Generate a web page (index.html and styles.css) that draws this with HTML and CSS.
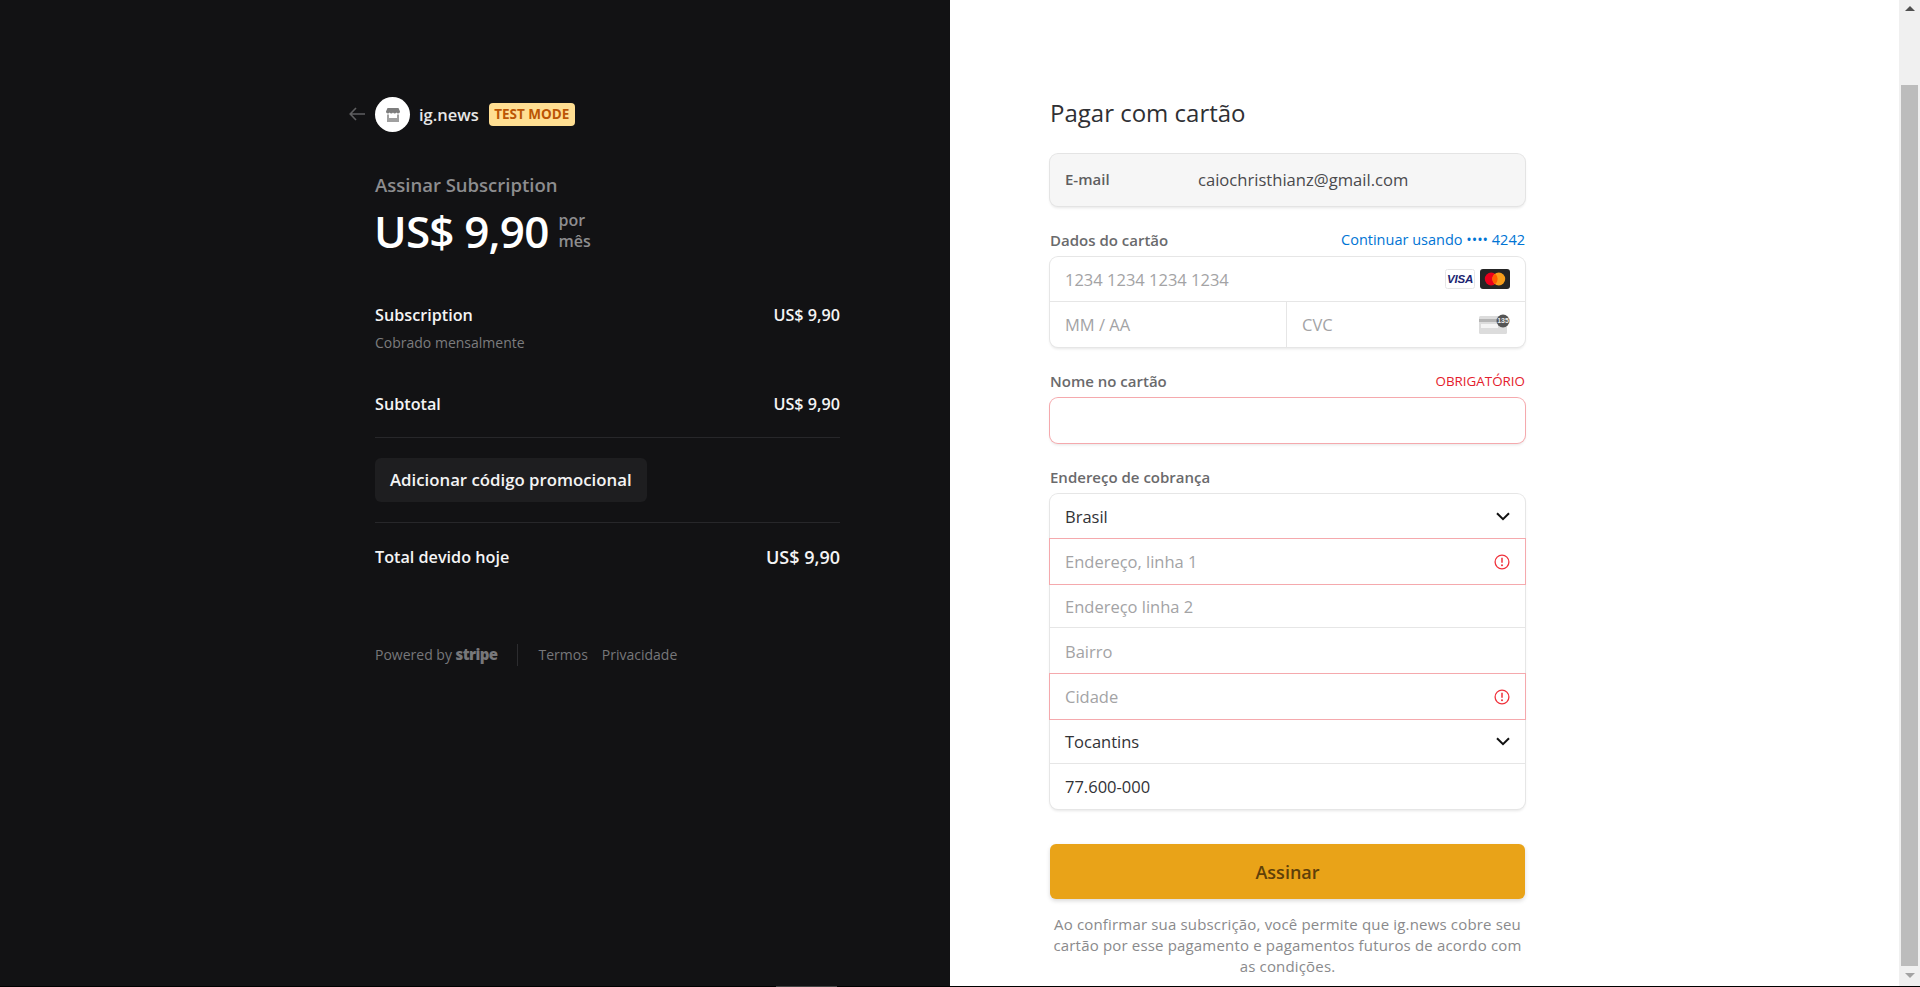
FILE: index.html
```html
<!doctype html>
<html lang="pt-BR">
<head>
  <meta charset="utf-8">
  <title>Pagar com cartão</title>
  <link rel="stylesheet" href="styles.css">
</head>
<body>
  <div class="page">
    <main class="checkout">
      <section class="summary">
        <div class="summary-inner">
          <header class="brand">
            <svg class="back" width="16" height="14" viewBox="0 0 16 14"><path d="M7 1 1.200 7 7 13M1.500 7H16" fill="none" stroke="#5f5f61" stroke-width="1.600"/></svg>
            <span class="logo">
              <svg width="14" height="14" viewBox="0 0 14 14"><path d="M1.500 0h11L14 3.600c0 1.200-.9 1.900-1.900 1.900-.8 0-1.400-.4-1.700-1-.4.6-.9 1-1.700 1s-1.300-.4-1.700-1c-.4.6-.9 1-1.700 1s-1.300-.4-1.700-1c-.3.6-.9 1-1.700 1C.9 5.500 0 4.800 0 3.600Z" fill="#7d7d7d"/><path d="M1 6.500h2v3.500h8V6.500h2V14H1Z" fill="#a0a0a0"/></svg>
            </span>
            <span class="brand-name">ig.news</span>
            <span class="badge">TEST MODE</span>
          </header>

          <div class="plan">
            <div class="plan-title">Assinar Subscription</div>
            <div class="plan-price">
              <span class="price">US$ 9,90</span>
              <span class="period">por<br>mês</span>
            </div>
          </div>

          <div class="line line-first">
            <div>
              <div class="line-name">Subscription</div>
              <div class="line-note">Cobrado mensalmente</div>
            </div>
            <div class="line-name">US$ 9,90</div>
          </div>

          <div class="line line-subtotal">
            <div class="line-name">Subtotal</div>
            <div class="line-name">US$ 9,90</div>
          </div>

          <div class="promo">
            <span class="promo-btn">Adicionar código promocional</span>
          </div>

          <div class="line line-total">
            <div class="line-name">Total devido hoje</div>
            <div class="total-price">US$ 9,90</div>
          </div>

          <footer class="legal">
            <span class="powered">Powered by <b class="stripe">stripe</b></span>
            <span class="legal-links">
              <span>Termos</span>
              <span>Privacidade</span>
            </span>
          </footer>
        </div>
      </section>

      <section class="payment">
        <form class="pay-form">
          <h1 class="pay-title">Pagar com cartão</h1>

          <div class="email-box">
            <span class="email-label">E-mail</span>
            <span class="email-value">caiochristhianz@gmail.com</span>
          </div>

          <div class="field-head">
            <span class="field-label">Dados do cartão</span>
            <span class="field-link">Continuar usando •••• 4242</span>
          </div>
          <div class="box">
            <div class="row row-h45">
              <span class="hint">1234 1234 1234 1234</span>
              <span class="card-icons">
                <svg width="30" height="20" viewBox="0 0 30 20"><rect x=".5" y=".5" width="29" height="19" rx="2" fill="#fff" stroke="#e6e6e6"/><text class="visa-text" x="15" y="14.200" text-anchor="middle">VISA</text></svg>
                <svg width="30" height="20" viewBox="0 0 30 20"><rect width="30" height="20" rx="3" fill="#252525"/><circle cx="11.200" cy="10" r="6.400" fill="#eb001b"/><circle cx="18.800" cy="10" r="6.400" fill="#f79e1b"/><path d="M15 4.800a6.400 6.400 0 0 1 0 10.400 6.400 6.400 0 0 1 0-10.400Z" fill="#ff5f00"/></svg>
              </span>
            </div>
            <div class="row-split">
              <div class="cell cell-exp"><span class="hint">MM / AA</span></div>
              <div class="cell cell-cvc">
                <span class="hint">CVC</span>
                <svg width="31" height="21" viewBox="0 0 31 21"><rect y="2" width="28" height="18" rx="1.500" fill="#dcdcdc"/><rect y="5" width="28" height="3" fill="#b5b5b5"/><rect x="2" y="10" width="17" height="4" fill="#f4f4f4"/><circle cx="24" cy="7" r="6.500" fill="#555"/><text class="cvc-text" x="24" y="9.300" text-anchor="middle">135</text></svg>
              </div>
            </div>
          </div>

          <div class="field-head">
            <span class="field-label">Nome no cartão</span>
            <span class="field-error">OBRIGATÓRIO</span>
          </div>
          <div class="box box-error"></div>

          <div class="field-head">
            <span class="field-label">Endereço de cobrança</span>
          </div>
          <div class="box">
            <div class="row row-h45 row-plain"><span class="value">Brasil</span><svg class="chevron" width="14" height="9" viewBox="0 0 14 9"><path d="M1 1.200 7 7.200l6-6" fill="none" stroke="#111" stroke-width="2"/></svg></div>
            <div class="row row-h45 row-error"><span class="hint">Endereço, linha 1</span><svg class="alert" width="16" height="16" viewBox="0 0 16 16"><circle cx="8" cy="8" r="6.900" fill="none" stroke="#f0323c" stroke-width="1.300"/><path d="M8 3.800v5" stroke="#f0323c" stroke-width="1.500"/><circle cx="8" cy="11.300" r="1" fill="#f0323c"/></svg></div>
            <div class="row row-h44"><span class="hint">Endereço linha 2</span></div>
            <div class="row row-h46 row-plain"><span class="hint">Bairro</span></div>
            <div class="row row-h45 row-error"><span class="hint">Cidade</span><svg class="alert" width="16" height="16" viewBox="0 0 16 16"><circle cx="8" cy="8" r="6.900" fill="none" stroke="#f0323c" stroke-width="1.300"/><path d="M8 3.800v5" stroke="#f0323c" stroke-width="1.500"/><circle cx="8" cy="11.300" r="1" fill="#f0323c"/></svg></div>
            <div class="row row-h45"><span class="value">Tocantins</span><svg class="chevron" width="14" height="9" viewBox="0 0 14 9"><path d="M1 1.200 7 7.200l6-6" fill="none" stroke="#111" stroke-width="2"/></svg></div>
            <div class="row row-h45 row-plain"><span class="value">77.600-000</span></div>
          </div>

          <button class="submit" type="button">Assinar</button>
          <p class="terms">Ao confirmar sua subscrição, você permite que ig.news cobre seu cartão por esse pagamento e pagamentos futuros de acordo com as condições.</p>
        </form>
      </section>
    </main>

    <aside class="scrollbar">
      <span class="arrow-up"></span>
      <span class="thumb"></span>
      <span class="arrow-down"></span>
    </aside>
  </div>
  <div class="bottom-edge"><span class="edge-mark"></span></div>
</body>
</html>
```

FILE: styles.css
```css
*{
  box-sizing: border-box;
}
html, body{
  height: 100%;
}
body{
  margin: 0;
  overflow: hidden;
  background: #000;
  font-family: "Open Sans", "Noto Sans", "Liberation Sans", sans-serif;
  display: flex;
  flex-direction: column;
}
.page{
  display: flex;
  height: 986px;
}
.checkout{
  display: grid;
  grid-template-columns: 950px 949px;
  flex: 1;
}

/* left side */
.summary{
  background: #121214;
  padding-top: 97px;
  padding-left: 375px;
}
.summary-inner{
  width: 465px;
}
.brand{
  display: flex;
  align-items: center;
  height: 35px;
  position: relative;
}
.back{
  position: absolute;
  left: -26px;
  top: 10px;
}
.logo{
  width: 35px;
  height: 35px;
  border-radius: 50%;
  background: #fff;
  display: flex;
  align-items: center;
  justify-content: center;
  margin-right: 9px;
}
.brand-name{
  color: #e7e7e7;
  font-size: 16.500px;
  font-weight: 600;
  margin-right: 10px;
}
.badge{
  background: #ffde92;
  color: #bb5504;
  border-radius: 4px;
  font-size: 13.500px;
  font-weight: 700;
  line-height: 23px;
  height: 23px;
  width: 86px;
  text-align: center;
  white-space: nowrap;
}
.plan{
  margin-top: 41px;
}
.plan-title{
  color: #8d8d8f;
  font-size: 18.500px;
  font-weight: 600;
  line-height: 24px;
}
.plan-price{
  display: flex;
  align-items: center;
  margin-top: 6px;
}
.price{
  color: #fff;
  font-size: 44px;
  font-weight: 600;
  line-height: 56px;
  letter-spacing: -.8px;
  margin-left: -1px;
}
.period{
  color: #8d8d8f;
  font-size: 16px;
  font-weight: 600;
  line-height: 21px;
  margin-left: 10px;
}
.line{
  display: flex;
  justify-content: space-between;
}
.line-first{
  margin-top: 45px;
}
.line-name{
  color: #f4f4f4;
  font-size: 16.200px;
  font-weight: 600;
  line-height: 22px;
}
.line-note{
  color: #7c7c7e;
  font-size: 14px;
  line-height: 18px;
  margin-top: 8px;
}
.line-subtotal{
  margin-top: 41px;
  padding-bottom: 22px;
  border-bottom: 1px solid #27272a;
}
.promo{
  display: flex;
  padding: 20px 0;
  border-bottom: 1px solid #27272a;
}
.promo-btn{
  background: #1e1e20;
  color: #f4f4f4;
  border-radius: 6px;
  font-size: 16.800px;
  font-weight: 600;
  line-height: 44px;
  padding: 0 15px;
}
.line-total{
  margin-top: 23px;
}
.total-price{
  color: #f4f4f4;
  font-size: 18px;
  font-weight: 600;
  line-height: 22px;
}
.legal{
  display: flex;
  align-items: center;
  margin-top: 75px;
  color: #77777a;
  font-size: 14px;
  line-height: 22px;
}
.stripe{
  font-size: 15px;
  font-weight: 800;
  letter-spacing: -.6px;
  color: #77777a;
}
.legal-links{
  display: flex;
  gap: 14px;
  border-left: 1px solid #2c2c2f;
  margin-left: 20px;
  padding-left: 20px;
}

/* right side */
.payment{
  background: #fff;
  padding-left: 100px;
}
.pay-form{
  width: 475px;
}
.pay-title{
  margin: 0;
  padding-top: 95px;
  color: #2f3034;
  font-size: 24px;
  font-weight: 500;
  line-height: 36px;
}
.email-box{
  display: flex;
  align-items: center;
  height: 52px;
  margin-top: 23px;
  padding: 0 15px 2px;
  background: #f6f6f6;
  border-radius: 8px;
  box-shadow: 0 0 0 1px #e4e4e4, 0 2px 3px rgba(0,0,0,.1);
}
.email-label{
  width: 133px;
  color: #5e5e60;
  font-size: 15px;
  font-weight: 600;
}
.email-value{
  color: #4a4a4d;
  font-size: 16.600px;
}
.field-head{
  display: flex;
  justify-content: space-between;
  align-items: center;
  height: 20px;
  margin-top: 24px;
  margin-bottom: 7px;
}
.field-label{
  color: #6a6a6c;
  font-size: 15px;
  font-weight: 600;
}
.field-link{
  color: #0074d4;
  font-size: 14.500px;
  margin-top: -2px;
}
.field-error{
  color: #e4202c;
  font-size: 13.400px;
  font-weight: 500;
}
.box{
  border-radius: 8px;
  background: #fff;
  box-shadow: 0 0 0 1px #e6e6e6, 0 2px 3px rgba(0,0,0,.1);
}
.box-error{
  height: 45px;
  box-shadow: 0 0 0 1px #f5a9ad, 0 2px 3px rgba(0,0,0,.1);
}
.row{
  display: flex;
  justify-content: space-between;
  align-items: center;
  padding: 0 15px;
  border-bottom: 1px solid #e6e6e6;
}
.row-split{
  display: grid;
  grid-template-columns: 237px 1fr;
  height: 45px;
}
.cell{
  display: flex;
  justify-content: space-between;
  align-items: center;
  padding: 0 15px;
}
.cell-exp{
  border-right: 1px solid #e6e6e6;
}
.hint{
  color: #a3a3a5;
  font-size: 16.500px;
}
.value{
  color: #323236;
  font-size: 16.500px;
}
.card-icons{
  display: flex;
  gap: 5px;
}
.visa-text{
  font-family: "Liberation Sans", sans-serif;
  font-size: 11.500px;
  font-weight: 700;
  font-style: italic;
  letter-spacing: -.2px;
  fill: #1a1f71;
}
.cvc-text{
  font-family: "Liberation Sans", sans-serif;
  font-size: 7px;
  font-weight: 700;
  fill: #e8e8e8;
}
.row-h44{
  height: 44px;
  padding-top: 1px;
}
.row-h45{
  height: 45px;
}
.row-h46{
  height: 46px;
}
.row-plain{
  border-bottom: 0;
}
.row-error{
  position: relative;
  border-bottom: 0;
  box-shadow: 0 0 0 1px #f5a9ad;
}
.submit{
  display: block;
  width: 100%;
  height: 55px;
  margin-top: 35px;
  border: 0;
  border-radius: 6px;
  background: #e9a318;
  color: #5f4009;
  font-family: inherit;
  font-size: 18px;
  font-weight: 600;
  box-shadow: 0 2px 4px rgba(0,0,0,.15);
}
.terms{
  margin: 15px 0 0;
  color: #8a8a8c;
  font-size: 15px;
  letter-spacing: .17px;
  line-height: 21px;
  text-align: center;
}

/* scrollbar */
.scrollbar{
  width: 21px;
  background: #f0f0f0;
  display: flex;
  flex-direction: column;
  align-items: center;
  padding-top: 6px;
}
.arrow-up{
  border: 5px solid transparent;
  border-top: 0;
  border-bottom: 5px solid #505050;
}
.thumb{
  width: 17px;
  height: 881px;
  margin-top: 74px;
  background: #bcbcbc;
}
.arrow-down{
  border: 5px solid transparent;
  border-bottom: 0;
  border-top: 5px solid #a3a3a3;
  margin-top: 7px;
}
.bottom-edge{
  height: 1px;
  padding-left: 776px;
}
.edge-mark{
  display: block;
  width: 61px;
  height: 1px;
  background: #444;
}
```
